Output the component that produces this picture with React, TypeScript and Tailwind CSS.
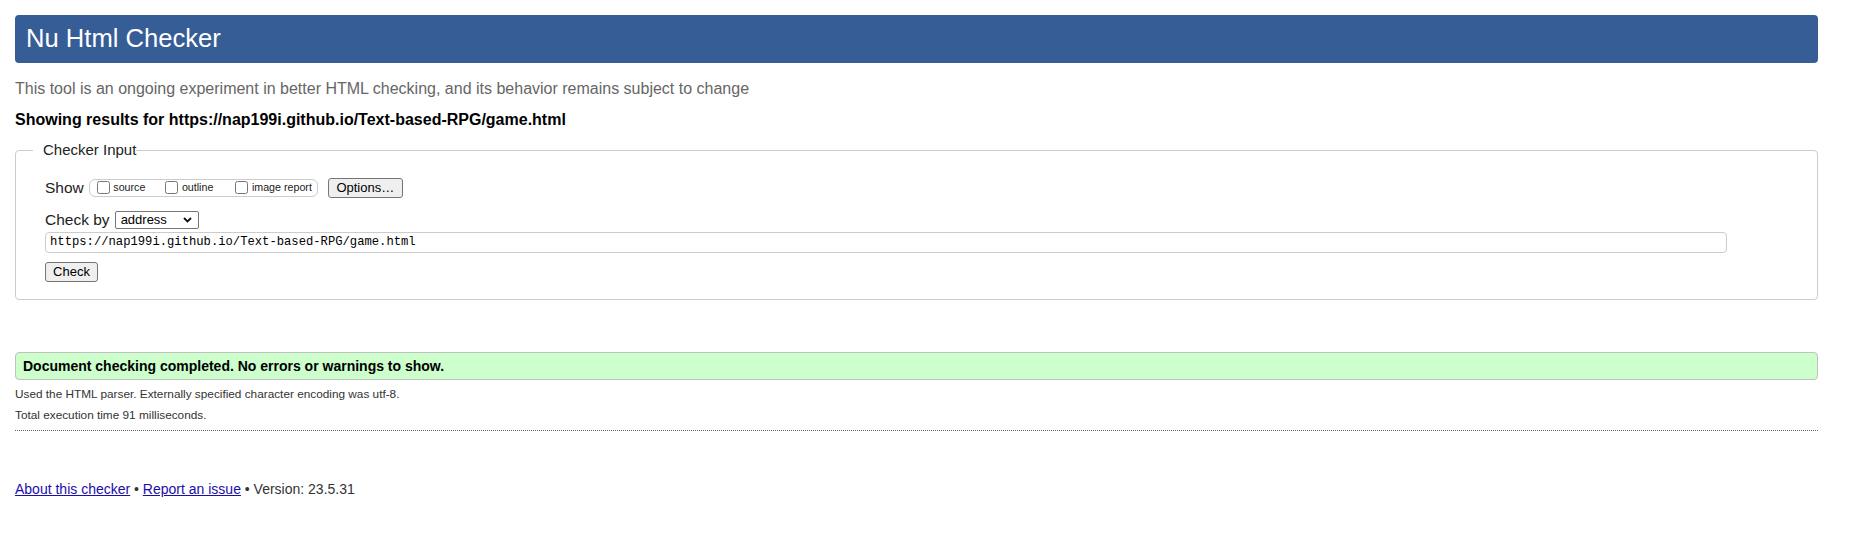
import React from 'react';

const Checkbox: React.FC<{ label: string; className?: string }> = ({ label, className = '' }) => (
  <label className={`flex items-start ${className}`}>
    <input type="checkbox" className="m-0 mt-[1px] h-[13px] w-[13px]" readOnly />
    <span className="ml-[3.5px] mt-[1.5px] text-[10.7px] leading-[13px]">{label}</span>
  </label>
);

const App: React.FC = () => {
  return (
    <div className="min-h-[537px] bg-white font-['Liberation_Sans',Arial,sans-serif] text-[#222]">
      <div className="ml-[15px] w-[1803px] pt-[15px]">
        <header className="flex h-[48px] items-center rounded-[4px] bg-[#365d95] pb-[2px] pl-[11px]">
          <h1 className="text-[25.6px] leading-[30px] text-white">Nu Html Checker</h1>
        </header>

        <p className="mt-[16px] text-[16px] leading-[20px] text-[#666]">
          This tool is an ongoing experiment in better HTML checking, and its behavior remains subject to change
        </p>
        <p className="mt-[11px] text-[16px] font-bold leading-[20px] text-black">
          Showing results for https://nap199i.github.io/Text-based-RPG/game.html
        </p>

        <fieldset className="mt-[11px] rounded-[4px] border border-[#ccc] pb-[17px] pl-[29px] pt-[18px]">
          <legend className="-ml-[12px] pl-[10px] text-[15px] leading-[18px] text-[#222]">Checker Input</legend>

          <div className="flex h-[21px] items-center">
            <span className="text-[15.5px] leading-[18px]">Show</span>
            <div className="ml-[5px] flex h-[18px] w-[229px] items-start rounded-[6px] border border-[#ccc] pl-[7px]">
              <Checkbox label="source" />
              <Checkbox label="outline" className="ml-[20px]" />
              <Checkbox label="image report" className="ml-[22px]" />
            </div>
            <button className="ml-[10px] h-[20px] w-[75px] rounded-[3px] border border-[#767676] bg-[#efefef] text-[13px] leading-[18px] text-black">
              Options…
            </button>
          </div>

          <div className="mt-[13px] flex h-[18px] items-center">
            <span className="text-[15.5px] leading-[18px]">Check by</span>
            <div className="ml-[5px] flex h-[18px] w-[84px] items-center justify-between rounded-[2px] border border-[#767676] bg-white pl-[5px] pr-[5px]">
              <span className="text-[13px] leading-[16px] text-black">address</span>
              <svg width="9" height="6" viewBox="0 0 9 6" className="mr-[0.5px]">
                <path d="M1 1 L4.5 4.5 L8 1" fill="none" stroke="#111" strokeWidth="1.8" />
              </svg>
            </div>
          </div>

          <div className="mt-[3px] flex h-[21px] w-[1682px] items-center rounded-[4px] border border-[#ccc] pl-[4px]">
            <span className="font-['Liberation_Mono',monospace] text-[12.2px] leading-[15px] text-black">
              https://nap199i.github.io/Text-based-RPG/game.html
            </span>
          </div>

          <button className="mt-[9px] block h-[20px] w-[53px] rounded-[3px] border border-[#767676] bg-[#efefef] text-[13px] leading-[18px] text-black">
            Check
          </button>
        </fieldset>

        <div className="mt-[52px] flex h-[28px] items-center rounded-[4px] border border-[#c0c0c0] bg-[#ccffcc] pl-[7px]">
          <span className="text-[14px] font-bold leading-[16px] text-black">
            Document checking completed. No errors or warnings to show.
          </span>
        </div>

        <p className="mt-[4px] text-[11.8px] leading-[21px] text-[#333]">
          Used the HTML parser. Externally specified character encoding was utf-8.
        </p>
        <p className="text-[11.8px] leading-[21px] text-[#333]">Total execution time 91 milliseconds.</p>

        <div className="mt-[4px] border-t border-dotted border-[#666]" />

        <p className="mt-[50px] text-[14px] leading-[17px] text-[#333]">
          <a href="#" className="text-[#1a0dab] underline">About this checker</a>
          {' • '}
          <a href="#" className="text-[#1a0dab] underline">Report an issue</a>
          {' • Version: 23.5.31'}
        </p>
      </div>
    </div>
  );
};

export default App;
